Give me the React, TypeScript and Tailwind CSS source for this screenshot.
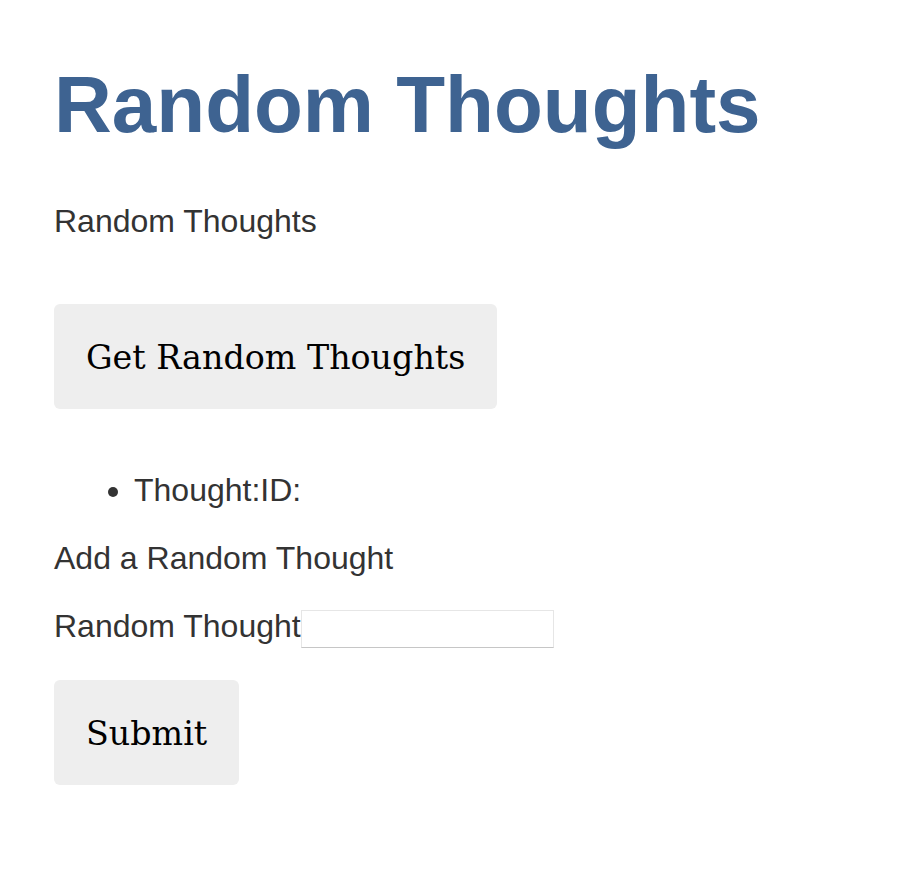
export default function App() {
  return (
    <div className="min-h-screen bg-white pl-[54px] pt-[59px] text-[#333] font-['Liberation_Sans',Arial,sans-serif]">
      <h1 className="text-[80px] leading-[92px] font-bold text-[#3e6391]">Random Thoughts</h1>
      <p className="mt-[52px] text-[32px] leading-[37px]">Random Thoughts</p>

      <button className="mt-[64px] flex h-[105px] items-center rounded-[6px] bg-[#eeeeee] px-8 pt-[3px] font-['DejaVu_Serif',Georgia,serif] text-[33.3px] text-black">
        Get Random Thoughts
      </button>

      <ul className="mt-[63px] list-disc pl-[80px] text-[32px] leading-[37px]">
        <li>Thought:ID:</li>
      </ul>

      <p className="mt-[31px] text-[32px] leading-[37px]">Add a Random Thought</p>

      <form className="mt-[31px]" onSubmit={(e) => e.preventDefault()}>
        <div className="flex items-start text-[32px] leading-[37px]">
          <label htmlFor="thought">Random Thought</label>
          <input
            id="thought"
            type="text"
            className="mt-[2px] h-[38px] w-[253px] border border-[#e6e6e6] border-b-[#c6c6c6] bg-white text-[16px] outline-none"
          />
        </div>
        <button
          type="submit"
          className="mt-[32px] flex h-[105px] items-center rounded-[6px] bg-[#eeeeee] px-8 pt-[3px] font-['DejaVu_Serif',Georgia,serif] text-[33.3px] text-black"
        >
          Submit
        </button>
      </form>
    </div>
  );
}
